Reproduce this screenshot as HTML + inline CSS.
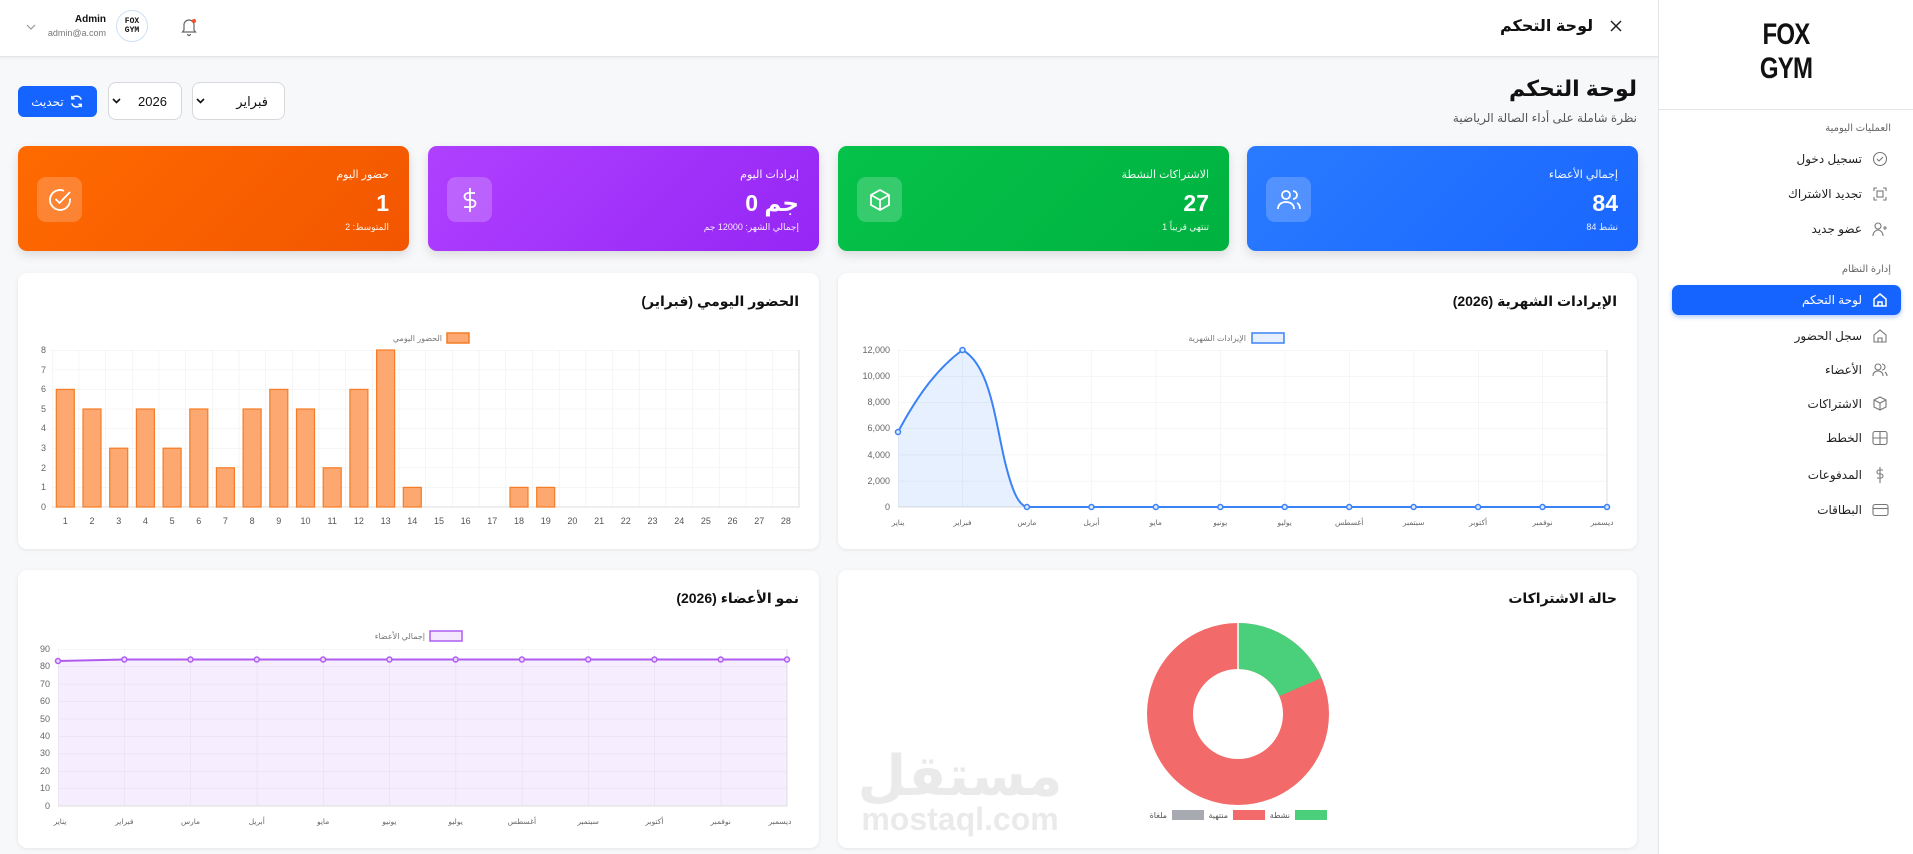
<!DOCTYPE html>
<html><head><meta charset="utf-8"><style>
*{box-sizing:border-box;margin:0;padding:0}
body{width:1913px;height:854px;overflow:hidden;background:#f7f8fa;font-family:"Liberation Sans","DejaVu Sans",sans-serif;position:relative;color:#111}
.abs{position:absolute}
.hdr{left:0;top:0;width:1658px;height:57px;background:#fff;border-bottom:1px solid #e3e5e9;box-shadow:0 1px 3px rgba(0,0,0,.06)}
.side{left:1658px;top:0;width:255px;height:854px;background:#fff;border-left:1px solid #e3e5e9}
.card{position:absolute;top:146px;height:105px;width:391px;border-radius:9px;color:#fff;box-shadow:0 4px 10px rgba(0,0,0,.12)}
.card .t{position:absolute;right:20px;top:22px;font-size:11px;opacity:.95}
.card .n{position:absolute;right:20px;top:44px;font-size:23px;font-weight:bold}
.card .s{position:absolute;right:20px;top:76px;font-size:9px;opacity:.9}
.card .ic{position:absolute;left:19px;top:31px;width:45px;height:45px;border-radius:9px;background:rgba(255,255,255,.2);display:flex;align-items:center;justify-content:center}
.panel{position:absolute;background:#fff;border-radius:9px;box-shadow:0 1px 4px rgba(0,0,0,.08)}
.ptitle{position:absolute;right:20px;top:20px;font-size:14px;font-weight:bold;direction:rtl}
.nav{position:absolute;right:51px;font-size:12px;color:#222;direction:rtl}
.ni{position:absolute;left:212px}
.sec{position:absolute;right:22px;font-size:10px;color:#666;direction:rtl}
svg text{font-family:"Liberation Sans","DejaVu Sans",sans-serif}
</style></head><body>

<div class="abs hdr">
  <svg class="abs" style="left:26px;top:23px" width="10" height="8" viewBox="0 0 10 8"><path d="M1 2l4 4 4-4" fill="none" stroke="#999" stroke-width="1.2"/></svg>
  <div class="abs" style="right:1552px;top:14px;font-size:10px;font-weight:bold;text-align:right">Admin</div>
  <div class="abs" style="right:1552px;top:28px;font-size:9px;color:#777">admin@a.com</div>
  <div class="abs" style="left:116px;top:10px;width:32px;height:32px;border-radius:50%;border:1.5px solid #cfe0f7;background:#fff;font-size:8px;font-weight:bold;line-height:9px;text-align:center;padding-top:6px;font-family:'Liberation Mono',monospace">FOX<br>GYM</div>
  <svg class="abs" style="left:180px;top:17px" width="18" height="20" viewBox="0 0 18 20"><path d="M4 13V8a5 5 0 0 1 10 0v5l1.5 2h-13z" fill="none" stroke="#666" stroke-width="1.2"/><path d="M7.5 17a1.5 1.5 0 0 0 3 0" fill="none" stroke="#666" stroke-width="1.2"/><circle cx="14" cy="4" r="2" fill="#f04e23"/></svg>
  <div class="abs" style="left:1500px;top:16px;font-size:16px;font-weight:bold;direction:rtl">لوحة التحكم</div>
  <svg class="abs" style="left:1609px;top:19px" width="14" height="14" viewBox="0 0 14 14"><path d="M2 2l10 10M12 2L2 12" stroke="#222" stroke-width="1.5"/></svg>
</div>

<div class="abs side">
  <div class="abs" style="left:92px;top:18px;width:70px;font-family:'Liberation Sans',sans-serif;font-weight:bold;font-size:30px;line-height:34px;color:#111;text-align:center;letter-spacing:-1px;transform:scaleX(.8)">FOX<br>GYM</div>
  <div class="abs" style="left:0;top:109px;width:255px;border-top:1px solid #e3e5e9"></div>
  <div class="sec" style="top:123px">العمليات اليومية</div>
  <div class="nav" style="top:152px">تسجيل دخول</div>
  <div class="nav" style="top:187px">تجديد الاشتراك</div>
  <div class="nav" style="top:222px">عضو جديد</div>
  <div class="sec" style="top:264px">إدارة النظام</div>
  <div class="abs" style="left:13px;top:285px;width:229px;height:30px;background:#1664ff;border-radius:7px;box-shadow:0 2px 5px rgba(22,100,255,.35)"></div>
  <div class="nav" style="top:293px;color:#fff">لوحة التحكم</div>
  <div class="nav" style="top:329px">سجل الحضور</div>
  <div class="nav" style="top:363px">الأعضاء</div>
  <div class="nav" style="top:397px">الاشتراكات</div>
  <div class="nav" style="top:431px">الخطط</div>
  <div class="nav" style="top:468px">المدفوعات</div>
  <div class="nav" style="top:503px">البطاقات</div>

  <svg class="ni" style="top:150px" width="18" height="18" viewBox="0 0 18 18" fill="none" stroke="#777" stroke-width="1.1"><circle cx="9" cy="9" r="6.5"/><path d="M6 9l2 2 4-4"/></svg>
  <svg class="ni" style="top:185px" width="18" height="18" viewBox="0 0 18 18" fill="none" stroke="#777" stroke-width="1.1"><path d="M3 6V3h3M12 3h3v3M15 12v3h-3M6 15H3v-3"/><rect x="6" y="6" width="6" height="6"/></svg>
  <svg class="ni" style="top:220px" width="18" height="18" viewBox="0 0 18 18" fill="none" stroke="#777" stroke-width="1.1"><circle cx="7" cy="6" r="3"/><path d="M2 16c0-4 3-6 5-6s5 2 5 6M14 6v4M12 8h4"/></svg>
  <svg class="ni" style="top:291px" width="18" height="18" viewBox="0 0 18 18" fill="none" stroke="#fff" stroke-width="1.5"><path d="M3 8l6-5 6 5v7H3z"/><path d="M7 15v-4h4v4"/></svg>
  <svg class="ni" style="top:327px" width="18" height="18" viewBox="0 0 18 18" fill="none" stroke="#777" stroke-width="1.1"><path d="M3 8l6-5 6 5v7H3z"/><path d="M7 15v-4h4v4"/></svg>
  <svg class="ni" style="top:361px" width="18" height="18" viewBox="0 0 18 18" fill="none" stroke="#777" stroke-width="1.1"><circle cx="7" cy="6" r="3"/><path d="M2 15c0-4 3-5 5-5s5 1 5 5M11 3a3 3 0 0 1 0 6M14 11c1 1 2 2 2 4"/></svg>
  <svg class="ni" style="top:395px" width="18" height="18" viewBox="0 0 18 18" fill="none" stroke="#777" stroke-width="1.1"><path d="M9 2l6 3v7l-6 3-6-3V5zM3 5l6 3 6-3M9 8v7"/></svg>
  <svg class="ni" style="top:429px" width="18" height="18" viewBox="0 0 18 18" fill="none" stroke="#777" stroke-width="1.1"><rect x="2" y="2.5" width="14" height="13" rx="2"/><path d="M9 2.5v13M2 9h14"/></svg>
  <svg class="ni" style="top:466px" width="18" height="18" viewBox="0 0 18 18" fill="none" stroke="#777" stroke-width="1.1"><path d="M9 1v16M12 4H8a2 2 0 0 0 0 4h2a2 2 0 0 1 0 4H6"/></svg>
  <svg class="ni" style="top:501px" width="18" height="18" viewBox="0 0 18 18" fill="none" stroke="#777" stroke-width="1.1"><rect x="2" y="3.5" width="15" height="11" rx="2"/><path d="M2 7.5h15"/></svg>
</div>

<div class="abs" style="right:276px;top:76px;font-size:22px;font-weight:bold;direction:rtl">لوحة التحكم</div>
<div class="abs" style="right:276px;top:111px;font-size:12px;color:#555;direction:rtl">نظرة شاملة على أداء الصالة الرياضية</div>

<div class="abs" style="left:18px;top:86px;width:79px;height:31px;border-radius:6px;background:#1664ff;color:#fff;font-size:12px;display:flex;align-items:center;justify-content:center;gap:5px"><span>تحديث</span><svg width="15" height="15" viewBox="0 0 16 16" fill="none" stroke="#fff" stroke-width="1.6"><path d="M13 6a5.5 5.5 0 0 0-10-1M3 10a5.5 5.5 0 0 0 10 1M3 2v3h3M13 14v-3h-3"/></svg></div>
<div class="abs" style="left:108px;top:82px;width:74px;height:38px;border:1px solid #d6d8dc;border-radius:8px;background:#fff;font-size:13px"><span class="abs" style="left:29px;top:11px">2026</span><svg class="abs" style="left:3px;top:15px" width="9" height="7"><path d="M1 1l3.5 3.5L8 1" fill="none" stroke="#111" stroke-width="1.6"/></svg></div>
<div class="abs" style="left:192px;top:82px;width:93px;height:38px;border:1px solid #d6d8dc;border-radius:8px;background:#fff;font-size:13px;direction:rtl"><span class="abs" style="right:16px;top:11px">فبراير</span><svg class="abs" style="left:3px;top:15px" width="9" height="7"><path d="M1 1l3.5 3.5L8 1" fill="none" stroke="#111" stroke-width="1.6"/></svg></div>

<div class="card" style="left:1247px;background:linear-gradient(135deg,#2a7bff,#1a66ff)"><div class="t">إجمالي الأعضاء</div><div class="n">84</div><div class="s">84 نشط</div><div class="ic"><svg width="26" height="24" viewBox="0 0 26 24" fill="none" stroke="#fff" stroke-width="1.8"><circle cx="10" cy="7" r="4"/><path d="M2 21c0-5 4-7 8-7s8 2 8 7M17 3a4 4 0 0 1 0 8M21 15c2 1 3 3 3 6"/></svg></div></div>
<div class="card" style="left:838px;background:linear-gradient(135deg,#05c24a,#00b240)"><div class="t">الاشتراكات النشطة</div><div class="n">27</div><div class="s">1 تنتهي قريباً</div><div class="ic"><svg width="24" height="24" viewBox="0 0 24 24" fill="none" stroke="#fff" stroke-width="1.8"><path d="M12 2l9 5v10l-9 5-9-5V7zM3 7l9 5 9-5M12 12v10"/></svg></div></div>
<div class="card" style="left:428px;background:linear-gradient(135deg,#b040ff,#9526f5)"><div class="t">إيرادات اليوم</div><div class="n">0 جم</div><div class="s">إجمالي الشهر: 12000 جم</div><div class="ic"><svg width="20" height="26" viewBox="0 0 20 26" fill="none" stroke="#fff" stroke-width="1.8"><path d="M10 1v24M15 6H8a3.5 3.5 0 0 0 0 7h4a3.5 3.5 0 0 1 0 7H4"/></svg></div></div>
<div class="card" style="left:18px;background:linear-gradient(135deg,#ff6a00,#f25600)"><div class="t">حضور اليوم</div><div class="n">1</div><div class="s">المتوسط: 2</div><div class="ic"><svg width="26" height="26" viewBox="0 0 26 26" fill="none" stroke="#fff" stroke-width="1.8"><path d="M23 11.5V13a10 10 0 1 1-6-9.2"/><path d="M8.5 12l4 4L23 5"/></svg></div></div>

<div class="panel" style="left:838px;top:273px;width:799px;height:276px"><div class="ptitle">الإيرادات الشهرية (2026)</div></div>
<div class="panel" style="left:18px;top:273px;width:801px;height:276px"><div class="ptitle">الحضور اليومي (فبراير)</div></div>
<div class="panel" style="left:838px;top:570px;width:799px;height:278px"><div class="ptitle">حالة الاشتراكات</div></div>
<div class="panel" style="left:18px;top:570px;width:801px;height:278px"><div class="ptitle">نمو الأعضاء (2026)</div></div>

<svg class="abs" style="left:0;top:0" width="1913" height="854">
<defs>
<pattern id="ga" x="52" y="350" width="26.68" height="19.6" patternUnits="userSpaceOnUse"><path d="M0 0h26.68M0 0v19.6" stroke="#ececec" stroke-width="1" fill="none"/></pattern>
<pattern id="gr" x="898" y="350" width="64.45" height="26.17" patternUnits="userSpaceOnUse"><path d="M0 0h64.45M0 0v26.17" stroke="#ececec" stroke-width="1" fill="none"/></pattern>
<pattern id="gm" x="58" y="649" width="66.27" height="17.44" patternUnits="userSpaceOnUse"><path d="M0 0h66.27M0 0v17.44" stroke="#ececec" stroke-width="1" fill="none"/></pattern>
</defs>
<rect x="52" y="350" width="747" height="157" fill="url(#ga)"/>
<path d="M799 350V507H52" stroke="#ddd" fill="none"/>
<g fill="#fca870" stroke="#f57c24" stroke-width="1.2">
<rect x="56.3" y="389.4" width="18" height="117.6"/><rect x="83" y="409" width="18" height="98"/><rect x="109.7" y="448.2" width="18" height="58.8"/><rect x="136.4" y="409" width="18" height="98"/><rect x="163.1" y="448.2" width="18" height="58.8"/><rect x="189.8" y="409" width="18" height="98"/><rect x="216.4" y="467.8" width="18" height="39.2"/><rect x="243.1" y="409" width="18" height="98"/><rect x="269.8" y="389.4" width="18" height="117.6"/><rect x="296.5" y="409" width="18" height="98"/><rect x="323.2" y="467.8" width="18" height="39.2"/><rect x="349.9" y="389.4" width="18" height="117.6"/><rect x="376.6" y="350" width="18" height="157"/><rect x="403.3" y="487.4" width="18" height="19.6"/><rect x="510" y="487.4" width="18" height="19.6"/><rect x="536.7" y="487.4" width="18" height="19.6"/>
</g>
<rect x="447" y="333" width="22" height="10" fill="#fca870" stroke="#f57c24" stroke-width="1.5"/>
<text x="442" y="341" font-size="8" fill="#777" text-anchor="end">الحضور اليومي</text>
<g font-size="9" fill="#666" text-anchor="end"><text x="46" y="353">8</text><text x="46" y="373">7</text><text x="46" y="392">6</text><text x="46" y="412">5</text><text x="46" y="431">4</text><text x="46" y="451">3</text><text x="46" y="471">2</text><text x="46" y="490">1</text><text x="46" y="510">0</text></g>
<g font-size="9" fill="#555" text-anchor="middle"><text x="65.3" y="524">1</text><text x="92" y="524">2</text><text x="118.7" y="524">3</text><text x="145.4" y="524">4</text><text x="172.1" y="524">5</text><text x="198.8" y="524">6</text><text x="225.4" y="524">7</text><text x="252.1" y="524">8</text><text x="278.8" y="524">9</text><text x="305.5" y="524">10</text><text x="332.2" y="524">11</text><text x="358.9" y="524">12</text><text x="385.6" y="524">13</text><text x="412.3" y="524">14</text><text x="439" y="524">15</text><text x="465.6" y="524">16</text><text x="492.3" y="524">17</text><text x="519" y="524">18</text><text x="545.7" y="524">19</text><text x="572.4" y="524">20</text><text x="599.1" y="524">21</text><text x="625.8" y="524">22</text><text x="652.5" y="524">23</text><text x="679.2" y="524">24</text><text x="705.9" y="524">25</text><text x="732.5" y="524">26</text><text x="759.2" y="524">27</text><text x="785.9" y="524">28</text></g>

<rect x="898" y="350" width="709" height="157" fill="url(#gr)"/>
<path d="M1607 350V507H898" stroke="#ddd" fill="none"/>
<path d="M898 432 C915 400 935 370 962.5 350 C990 365 995 420 1005 462 C1012 490 1018 505 1027 507 L1607 507 L898 507Z" fill="rgba(59,130,246,.12)"/>
<path d="M898 432 C915 400 935 370 962.5 350 C990 365 995 420 1005 462 C1012 490 1018 505 1027 507 L1607 507" fill="none" stroke="#3b82f6" stroke-width="2"/>
<g fill="#dbe8ff" stroke="#3b82f6" stroke-width="1.5"><circle cx="898" cy="432" r="2.5"/><circle cx="962.5" cy="350" r="2.5"/><circle cx="1026.9" cy="507" r="2.5"/><circle cx="1091.4" cy="507" r="2.5"/><circle cx="1155.8" cy="507" r="2.5"/><circle cx="1220.3" cy="507" r="2.5"/><circle cx="1284.7" cy="507" r="2.5"/><circle cx="1349.2" cy="507" r="2.5"/><circle cx="1413.6" cy="507" r="2.5"/><circle cx="1478.1" cy="507" r="2.5"/><circle cx="1542.5" cy="507" r="2.5"/><circle cx="1607" cy="507" r="2.5"/></g>
<rect x="1252" y="333" width="32" height="10" fill="#e8f0fe" stroke="#3b82f6" stroke-width="1.5"/>
<text x="1246" y="341" font-size="8" fill="#777" text-anchor="end">الإيرادات الشهرية</text>
<g font-size="9" fill="#666" text-anchor="end"><text x="890" y="353">12,000</text><text x="890" y="379">10,000</text><text x="890" y="405">8,000</text><text x="890" y="431">6,000</text><text x="890" y="458">4,000</text><text x="890" y="484">2,000</text><text x="890" y="510">0</text></g>
<g font-size="7.5" fill="#666" text-anchor="middle"><text x="898" y="525">يناير</text><text x="962.5" y="525">فبراير</text><text x="1026.9" y="525">مارس</text><text x="1091.4" y="525">أبريل</text><text x="1155.8" y="525">مايو</text><text x="1220.3" y="525">يونيو</text><text x="1284.7" y="525">يوليو</text><text x="1349.2" y="525">أغسطس</text><text x="1413.6" y="525">سبتمبر</text><text x="1478.1" y="525">أكتوبر</text><text x="1542.5" y="525">نوفمبر</text><text x="1602" y="525">ديسمبر</text></g>

<rect x="58" y="649" width="729" height="157" fill="url(#gm)"/>
<path d="M58 661 L124.3 659.5 L787 659.5 L787 806 L58 806Z" fill="rgba(168,85,247,.1)"/>
<path d="M787 649V806H58" stroke="#ddd" fill="none"/>
<path d="M58 661 L124.3 659.5 L787 659.5" fill="none" stroke="#b05cf0" stroke-width="2"/>
<g fill="#e9d5ff" stroke="#b05cf0" stroke-width="1.5"><circle cx="58" cy="661" r="2.5"/><circle cx="124.3" cy="659.5" r="2.5"/><circle cx="190.5" cy="659.5" r="2.5"/><circle cx="256.8" cy="659.5" r="2.5"/><circle cx="323.1" cy="659.5" r="2.5"/><circle cx="389.4" cy="659.5" r="2.5"/><circle cx="455.6" cy="659.5" r="2.5"/><circle cx="521.9" cy="659.5" r="2.5"/><circle cx="588.2" cy="659.5" r="2.5"/><circle cx="654.4" cy="659.5" r="2.5"/><circle cx="720.7" cy="659.5" r="2.5"/><circle cx="787" cy="659.5" r="2.5"/></g>
<rect x="430" y="631" width="32" height="10" fill="#f3e8ff" stroke="#b05cf0" stroke-width="1.5"/>
<text x="425" y="639" font-size="8" fill="#777" text-anchor="end">إجمالي الأعضاء</text>
<g font-size="9" fill="#666" text-anchor="end"><text x="50" y="652">90</text><text x="50" y="669">80</text><text x="50" y="687">70</text><text x="50" y="704">60</text><text x="50" y="722">50</text><text x="50" y="739">40</text><text x="50" y="756">30</text><text x="50" y="774">20</text><text x="50" y="791">10</text><text x="50" y="809">0</text></g>
<g font-size="7.5" fill="#666" text-anchor="middle"><text x="60" y="824">يناير</text><text x="124.3" y="824">فبراير</text><text x="190.5" y="824">مارس</text><text x="256.8" y="824">أبريل</text><text x="323.1" y="824">مايو</text><text x="389.4" y="824">يونيو</text><text x="455.6" y="824">يوليو</text><text x="521.9" y="824">أغسطس</text><text x="588.2" y="824">سبتمبر</text><text x="654.4" y="824">أكتوبر</text><text x="720.7" y="824">نوفمبر</text><text x="780" y="824">ديسمبر</text></g>

<circle cx="1238" cy="714" r="68" fill="none" stroke="#f26a6a" stroke-width="46"/>
<circle cx="1238" cy="714" r="68" fill="none" stroke="#4ad07a" stroke-width="46" stroke-dasharray="79 400" transform="rotate(-90 1238 714)"/>
<path d="M1238 623V669" stroke="#fff" stroke-width="1.5"/>
<rect x="1295" y="810" width="32" height="10" fill="#4ad07a"/><text x="1290" y="818" font-size="8" fill="#555" text-anchor="end">نشطة</text>
<rect x="1233" y="810" width="32" height="10" fill="#f26a6a"/><text x="1228" y="818" font-size="8" fill="#555" text-anchor="end">منتهية</text>
<rect x="1172" y="810" width="32" height="10" fill="#a7aab0"/><text x="1167" y="818" font-size="8" fill="#555" text-anchor="end">ملغاة</text>

<text x="960" y="795" font-size="56" font-weight="bold" fill="#e6e6e6" text-anchor="middle" opacity=".8">مستقل</text>
<text x="960" y="830" font-size="32" font-weight="bold" fill="#e6e6e6" text-anchor="middle" opacity=".8">mostaql.com</text>
</svg>
</body></html>
